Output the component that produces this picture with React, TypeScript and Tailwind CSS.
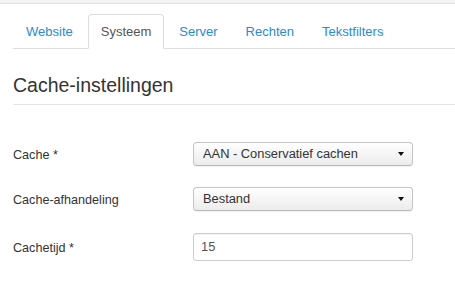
const tabs = ["Website", "Systeem", "Server", "Rechten", "Tekstfilters"];

const Caret = () => (
  <span className="w-0 h-0 border-l-[3.5px] border-r-[3.5px] border-t-[4px] border-l-transparent border-r-transparent border-t-[#111]" />
);

const SelectBox = ({ value }: { value: string }) => (
  <div className="w-[220px] h-[24px] flex items-center justify-between pl-[9px] pr-[8px] border border-[#c4c4c4] border-b-[#b9b9b9] rounded-[4px] bg-gradient-to-b from-white to-[#ececec] text-[12.85px] text-[#333] shadow-[0_1px_1px_rgba(0,0,0,0.06)]">
    <span>{value}</span>
    <Caret />
  </div>
);

const App = () => {
  return (
    <div className="w-[455px] h-[281px] bg-white overflow-hidden font-['Liberation_Sans',Arial,sans-serif]">
      <div className="h-[4px] bg-[#f3f3f3] border-b border-[#e2e2e2]" />
      <div className="pl-[13px] pt-[10px]">
        <ul className="flex border-b border-[#dddddd]">
          {tabs.map((t) => {
            const active = t === "Systeem";
            return (
              <li key={t} className="-mb-px mr-[2px]">
                <div
                  className={
                    active
                      ? "h-[35px] px-[12px] flex items-center text-[13px] text-[#555] bg-white border border-[#dddddd] border-b-white rounded-t-[4px]"
                      : "h-[35px] px-[12px] flex items-center text-[13px] text-[#2a8ad4] border border-transparent"
                  }
                >
                  {t}
                </div>
              </li>
            );
          })}
        </ul>
        <h2 className="mt-[24px] pb-[7px] text-[19.5px] leading-[24px] text-[#333] border-b border-[#e5e5e5]">
          Cache-instellingen
        </h2>
        <div className="mt-[37px] flex flex-col">
          <div className="flex items-center">
            <label className="w-[180px] pt-[2px] text-[12.6px] leading-[18px] text-[#333]">Cache *</label>
            <SelectBox value="AAN - Conservatief cachen" />
          </div>
          <div className="flex items-center mt-[21px]">
            <label className="w-[180px] pt-[2px] text-[12.6px] leading-[18px] text-[#333]">Cache-afhandeling</label>
            <SelectBox value="Bestand" />
          </div>
          <div className="flex items-center mt-[22px]">
            <label className="w-[180px] pt-[1px] text-[12.6px] leading-[18px] text-[#333]">Cachetijd *</label>
            <div className="w-[220px] h-[28px] flex items-center pl-[7px] border border-[#cccccc] rounded-[3px] bg-white text-[12.85px] text-[#555] shadow-[inset_0_1px_1px_rgba(0,0,0,0.05)]">
              15
            </div>
          </div>
        </div>
      </div>
    </div>
  );
};

export default App;
